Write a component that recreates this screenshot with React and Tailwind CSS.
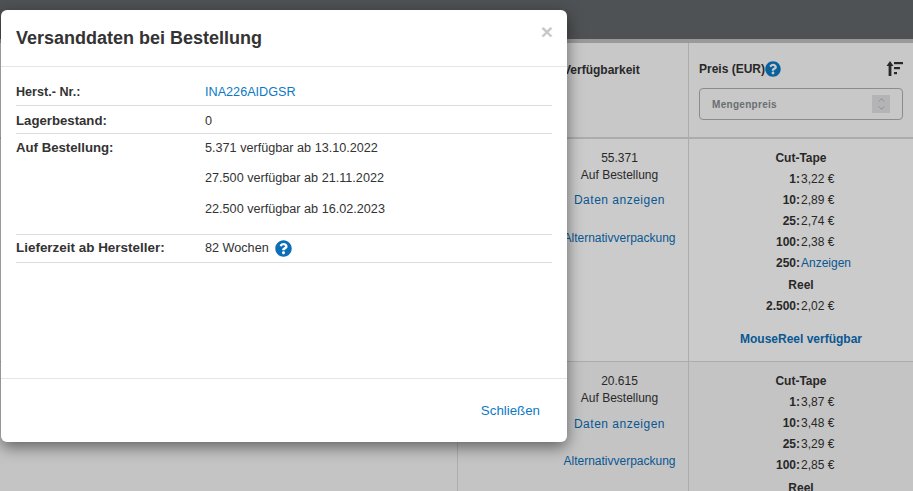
import React from 'react';
import { FaQuestionCircle } from 'react-icons/fa';
import { ChevronUp, ChevronDown } from 'lucide-react';

const cutTape1 = [
  ['1:', '3,22 €'],
  ['10:', '2,89 €'],
  ['25:', '2,74 €'],
  ['100:', '2,38 €'],
];

const cutTape2 = [
  ['1:', '3,87 €'],
  ['10:', '3,48 €'],
  ['25:', '3,29 €'],
  ['100:', '2,85 €'],
];

function PriceRow({ qty, children }) {
  return (
    <div className="flex h-[21px] items-center">
      <span className="w-[111px] text-right font-bold">{qty}</span>
      <span className="ml-[1px]">{children}</span>
    </div>
  );
}

function Availability({ count, linkClass, altClass }) {
  return (
    <div className="flex flex-col items-center text-center text-[#333]">
      <div className="h-[17px] leading-[17px]">{count}</div>
      <div className="h-[17px] leading-[17px]">Auf Bestellung</div>
      <div className={`h-[17px] leading-[17px] text-[#0b6fb8] tracking-[0.5px] ${linkClass}`}>Daten anzeigen</div>
      <div className={`h-[17px] leading-[17px] text-[#0b6fb8] whitespace-nowrap ${altClass}`}>Alternativverpackung</div>
    </div>
  );
}

function Background() {
  return (
    <div className="h-[491px] overflow-hidden bg-white font-['Liberation_Sans',Arial,sans-serif] text-[12px] text-[#333]">
      <div className="h-[39px] bg-[#63676a]" />
      <div className="h-[4px] bg-[#c0c0c0]" />
      <div className="grid grid-cols-[457px_94px_137px_225px]">
        {/* header row */}
        <div className="h-[96px] border-b-[2px] border-[#d8d8d8] bg-[#fafafa]" />
        <div className="h-[96px] border-b-[2px] border-l border-[#d8d8d8] bg-[#fafafa]" />
        <div className="h-[96px] border-b-[2px] border-[#d8d8d8] bg-[#fafafa] pl-[12px] pt-[18px] text-[12px] font-bold whitespace-nowrap">
          Verfügbarkeit
        </div>
        <div className="h-[96px] border-b-[2px] border-l border-[#d8d8d8] bg-[#fafafa] pl-[10px] pr-[10px] pt-[17px]">
          <div className="flex items-center justify-between">
            <div className="flex items-center font-bold">
              Preis (EUR)
              <FaQuestionCircle className="text-[16px] text-[#0b7ac6]" />
            </div>
            <svg width="17" height="16" viewBox="0 0 17 16" className="text-[#333]">
              <path d="M4 0 L7.5 5 H5.4 V15 H2.6 V5 H0.5 Z" fill="currentColor" />
              <rect x="8" y="1" width="9" height="2.2" fill="currentColor" />
              <rect x="8" y="6" width="6" height="2.2" fill="currentColor" />
              <rect x="8" y="11" width="3" height="2.2" fill="currentColor" />
            </svg>
          </div>
          <div className="mt-[10px] flex h-[32px] items-center justify-between rounded-[4px] border border-[#b0b0b4] pl-[12px] pr-[12px] text-[10px] font-bold tracking-[0.3px] text-[#868a8e]">
            Mengenpreis
            <span className="flex h-[18px] w-[18px] flex-col items-center justify-center bg-[#e2e2e5] text-[#96969a]">
              <ChevronUp size={11} strokeWidth={1.5} className="-mb-[1px]" />
              <ChevronDown size={11} strokeWidth={1.5} className="-mt-[1px]" />
            </span>
          </div>
        </div>

        {/* first part */}
        <div className="h-[223px] border-b border-[#d8d8d8] bg-[#fefefe]" />
        <div className="h-[223px] border-b border-l border-[#d8d8d8] bg-[#fefefe]" />
        <div className="h-[223px] border-b border-[#d8d8d8] bg-[#fefefe] pt-[11px]">
          <Availability count="55.371" linkClass="mt-[8px]" altClass="mt-[21px]" />
        </div>
        <div className="h-[223px] border-b border-l border-[#d8d8d8] bg-[#fefefe] pt-[9px]">
          <div className="h-[20px] text-center font-bold leading-[21px]">Cut-Tape</div>
          {cutTape1.map(([qty, price]) => (
            <PriceRow key={qty} qty={qty}>{price}</PriceRow>
          ))}
          <PriceRow qty="250:"><span className="text-[#0b6fb8]">Anzeigen</span></PriceRow>
          <div className="mt-[2px] h-[20px] text-center font-bold leading-[21px]">Reel</div>
          <PriceRow qty="2.500:">2,02 €</PriceRow>
          <div className="mt-[14px] text-center font-bold text-[#0b6fb8]">MouseReel verfügbar</div>
        </div>

        {/* second part */}
        <div className="h-[130px] bg-[#f5f5f5]" />
        <div className="h-[130px] border-l border-[#d8d8d8] bg-[#f5f5f5]" />
        <div className="h-[130px] bg-[#f5f5f5] pt-[11px]">
          <Availability count="20.615" linkClass="mt-[9px]" altClass="mt-[20px]" />
        </div>
        <div className="h-[130px] border-l border-[#d8d8d8] bg-[#f5f5f5] pt-[9px]">
          <div className="h-[20px] text-center font-bold leading-[21px]">Cut-Tape</div>
          {cutTape2.map(([qty, price]) => (
            <PriceRow key={qty} qty={qty}>{price}</PriceRow>
          ))}
          <div className="mt-[3px] h-[21px] text-center font-bold leading-[21px]">Reel</div>
        </div>
      </div>
    </div>
  );
}

function InfoRow({ label, labelClass = 'text-[13.2px]', children, className }) {
  return (
    <div className={`flex border-b border-[#ddd] ${className}`}>
      <div className={`w-[189px] font-bold ${labelClass}`}>{label}</div>
      <div className="flex-1 text-[12.65px]">{children}</div>
    </div>
  );
}

export default function App() {
  return (
    <div className="relative h-[491px] w-[913px] overflow-hidden">
      <Background />
      <div className="absolute inset-0 bg-black/20" />

      {/* modal */}
      <div className="absolute left-[1px] top-[10px] flex h-[432px] w-[566px] flex-col rounded-[6px] bg-white font-['Liberation_Sans',Arial,sans-serif] text-[12px] text-[#333] shadow-[0_5px_15px_rgba(0,0,0,0.5)]">
        <div className="relative h-[57px] shrink-0 border-b border-[#e5e5e5] pl-[15px] pt-[16px]">
          <h4 className="text-[18px] font-bold leading-[24px]">Versanddaten bei Bestellung</h4>
          <span className="absolute right-[14px] top-[11px] text-[21px] font-bold leading-[21px] text-[#c8c8c8]">×</span>
        </div>

        <div className="flex-1 pl-[15px] pr-[15px] pt-[14px]">
          <InfoRow label="Herst.- Nr.:" labelClass="text-[12.6px]" className="h-[25px] leading-[22px]">
            <span className="text-[#0b7ac6]">INA226AIDGSR</span>
          </InfoRow>
          <InfoRow label="Lagerbestand:" className="h-[28px] pt-[6px] leading-[18px]">0</InfoRow>
          <InfoRow label="Auf Bestellung:" className="h-[101px] pt-[5px] leading-[18px]">
            <div>5.371 verfügbar ab 13.10.2022</div>
            <div className="mt-[12px]">27.500 verfügbar ab 21.11.2022</div>
            <div className="mt-[13px]">22.500 verfügbar ab 16.02.2023</div>
          </InfoRow>
          <InfoRow label="Lieferzeit ab Hersteller:" labelClass="text-[13.45px]" className="h-[28px] items-center">
            <div className="flex items-center">
              82 Wochen
              <FaQuestionCircle className="ml-[6px] text-[17px] text-[#0b6fb8]" />
            </div>
          </InfoRow>
        </div>

        <div className="flex h-[64px] shrink-0 items-center justify-end border-t border-[#e5e5e5] pr-[27px]">
          <span className="text-[13.3px] text-[#0b7ac6]">Schließen</span>
        </div>
      </div>
    </div>
  );
}
